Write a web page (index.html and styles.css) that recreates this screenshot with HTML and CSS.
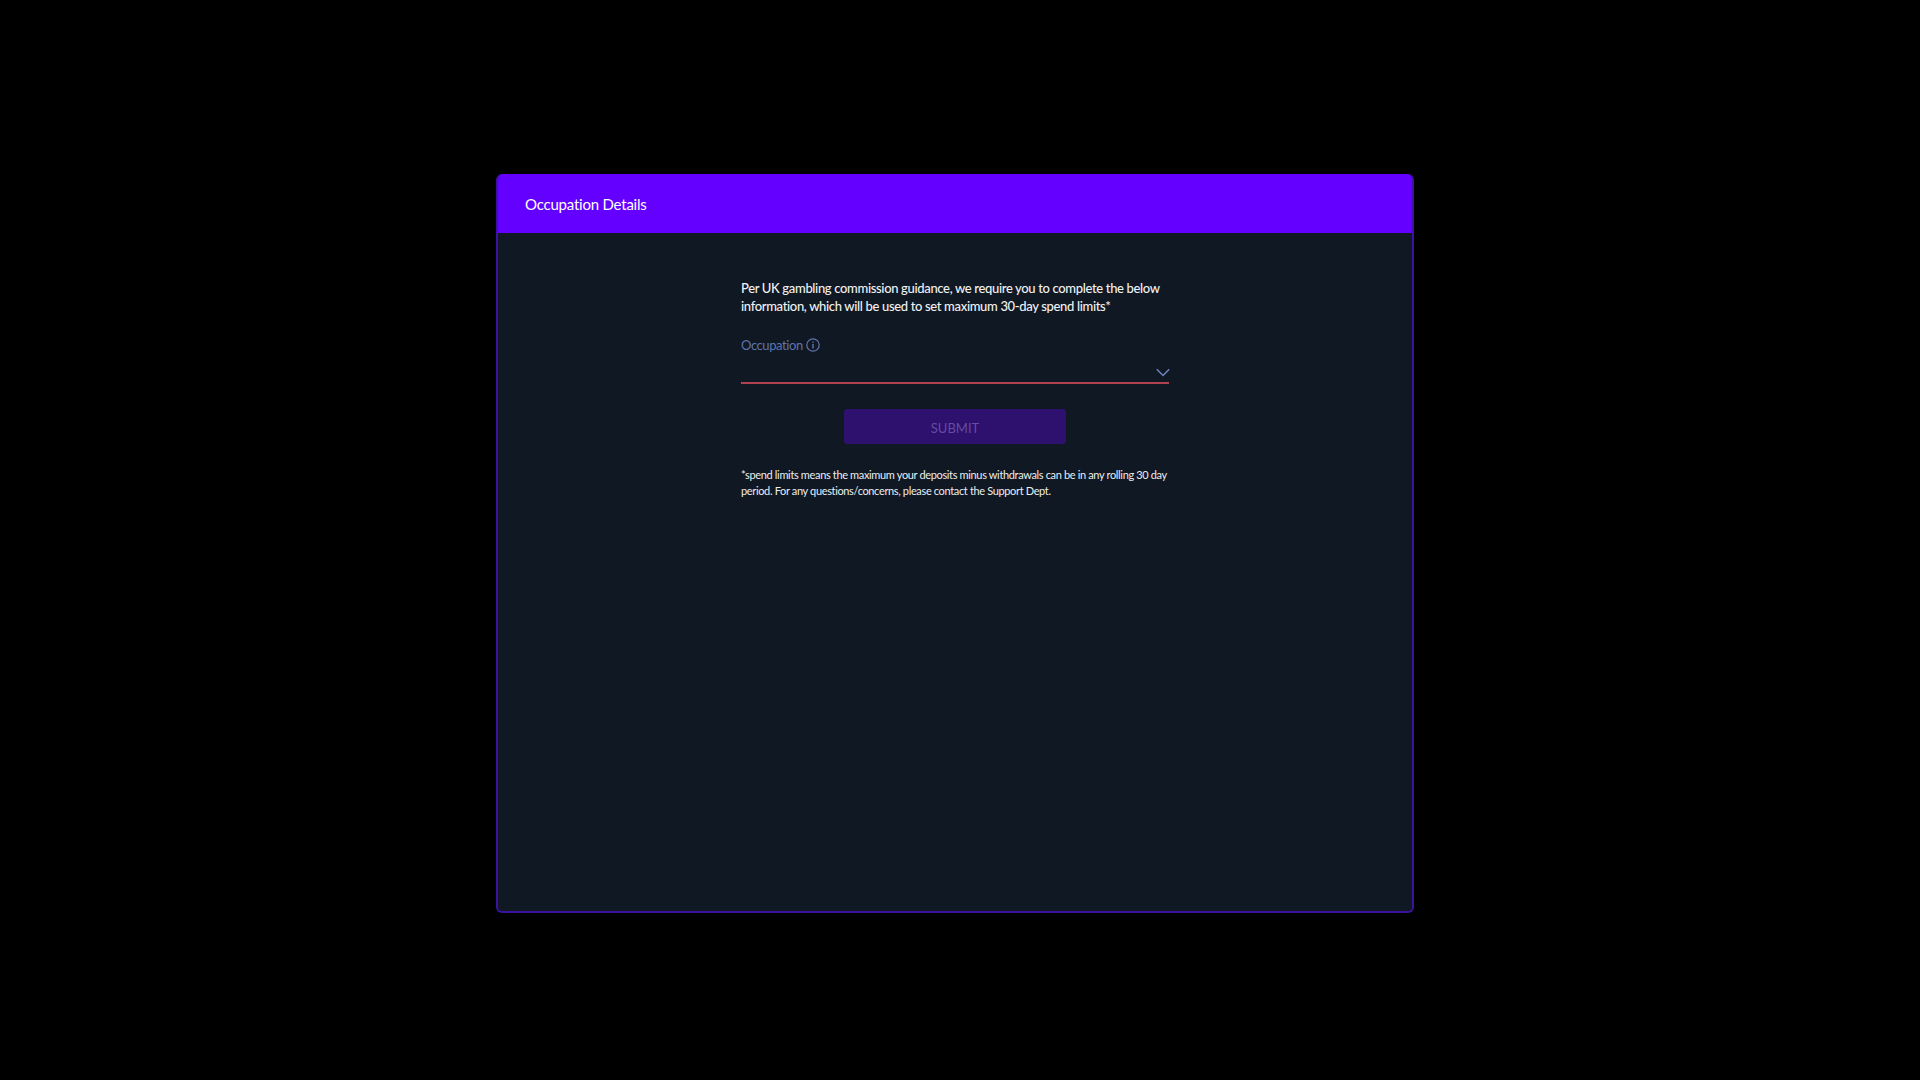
FILE: index.html
```html
<!DOCTYPE html>
<html lang="en">
<head>
<meta charset="utf-8">
<title>Occupation Details</title>
<link rel="stylesheet" href="styles.css">
</head>
<body>
<main class="modal">
  <header class="modal-header">Occupation Details</header>
  <section class="modal-body">
    <p class="intro">Per UK gambling commission guidance, we require you to complete the below<br>information, which will be used to set maximum 30-day spend limits*</p>
    <div class="field">
      <div class="field-label">
        <span>Occupation</span>
        <svg class="info-icon" viewBox="0 0 14 14" aria-hidden="true"><circle cx="7" cy="7" r="6.2" fill="none" stroke="currentColor" stroke-width="1.2"/><path d="M7 6v4.4M7 3.4v1.3" fill="none" stroke="currentColor" stroke-width="1.4"/></svg>
      </div>
      <div class="field-select">
        <svg class="chevron" viewBox="0 0 14 9" aria-hidden="true"><path d="M.8 1.2 7 7.6l6.2-6.4" fill="none" stroke="currentColor" stroke-width="1.4"/></svg>
      </div>
    </div>
    <button class="submit" type="button" disabled>SUBMIT</button>
    <p class="footnote">*spend limits means the maximum your deposits minus withdrawals can be in any rolling 30 day<br>period. For any questions/concerns, please contact the Support Dept.</p>
  </section>
</main>
</body>
</html>
```

FILE: styles.css
```css
* { box-sizing: border-box; }
html, body { height: 100%; }
body {
  margin: 0;
  background: #000;
  font-family: Lato, "Noto Sans", "Liberation Sans", sans-serif;
  display: flex;
  justify-content: center;
  padding: 174px 10px 167px 0;
}
.modal {
  width: 918px;
  display: flex;
  flex-direction: column;
  background: #0f1823;
  border: 2px solid #3c12a0;
  border-top: 0;
  border-radius: 6px;
  overflow: hidden;
}
.modal-header {
  margin: 0 -2px;
  height: 59px;
  flex: none;
  background: #6300ff;
  color: #fff;
  font-size: 15px;
  letter-spacing: -0.22px;
  line-height: 61px;
  padding-left: 29px;
}
.modal-body {
  width: 428px;
  margin-left: 243px;
  padding-top: 46px;
  display: flex;
  flex-direction: column;
}
.intro {
  margin: 0;
  color: #f0f1f2;
  font-size: 13px;
  font-weight: 500;
  line-height: 18px;
  letter-spacing: -0.34px;
  white-space: nowrap;
}
.field { margin-top: 20px; }
.field-label {
  display: flex;
  align-items: center;
  gap: 3px;
  height: 18px;
  padding-top: 1px;
  color: #5f74ad;
  font-size: 13px;
  letter-spacing: -0.42px;
}
.info-icon { width: 14px; height: 14px; }
.field-select {
  height: 31px;
  border-bottom: 2px solid #b0424f;
  display: flex;
  justify-content: flex-end;
  align-items: flex-end;
  padding-bottom: 5px;
}
.chevron { width: 14px; height: 9px; color: #6f86c4; margin-right: -1px; }
.submit {
  align-self: center;
  width: 222px;
  height: 35px;
  margin-top: 25px;
  padding-top: 3px;
  border: 0;
  border-radius: 3px;
  background: #2e106f;
  color: #644ca0;
  font: inherit;
  font-size: 13px;
}
.footnote {
  margin: 23px 0 0;
  color: #eceef0;
  font-size: 11px;
  line-height: 16px;
  letter-spacing: -0.35px;
  white-space: nowrap;
}
```
